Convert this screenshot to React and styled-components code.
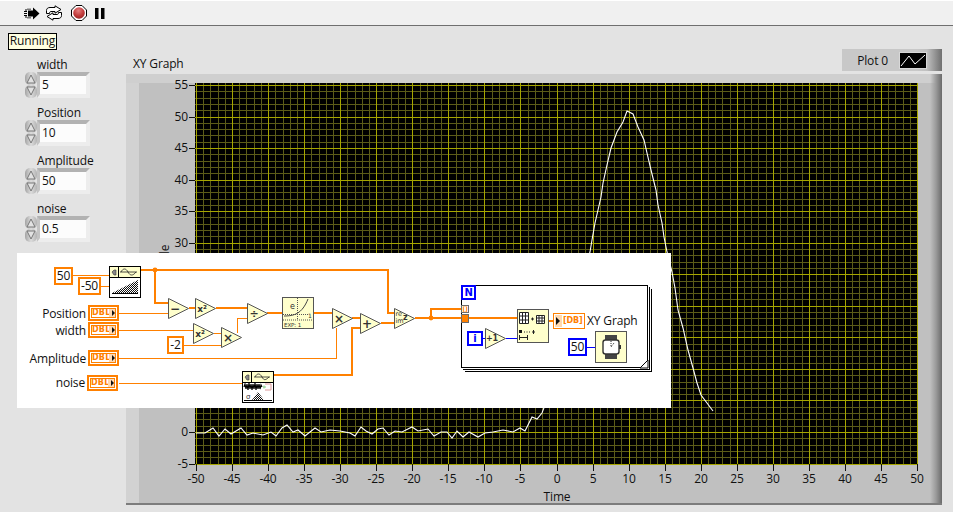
import React from 'react';
import styled, { createGlobalStyle } from 'styled-components';

const GlobalStyle = createGlobalStyle`
  html, body {
    margin: 0;
    padding: 0;
    background: #e3e3e3;
  }
`;

const ORANGE = '#ff8000';
const BLUE = '#0000ff';
const PALE = '#ffffcc';
const FONT = '"Open Sans", "Noto Sans", sans-serif';

const Page = styled.div`
  position: relative;
  width: 953px;
  height: 512px;
  overflow: hidden;
  background: #e3e3e3;
  font-family: ${FONT};
  font-size: 12px;
  letter-spacing: -0.15px;
  color: #111;
`;

const Toolbar = styled.div`
  display: flex;
  align-items: center;
  gap: 5px;
  height: 24px;
  padding-left: 24px;
  background: #f0f0f0;
  border-top: 1px solid #fff;
  border-bottom: 1px solid #6f6f6f;
  box-sizing: content-box;
`;

const ToolIcon = styled.svg`
  display: block;
  flex: none;
  margin-left: ${(p) => p.$gap || 0}px;
`;

const Main = styled.div`
  display: grid;
  grid-template-columns: 126px 816px;
`;

const LeftColumn = styled.div`
  display: flex;
  flex-direction: column;
`;

const RunningTag = styled.div`
  align-self: flex-start;
  margin: 7px 0 8px 8px;
  width: 49px;
  height: 17px;
  box-sizing: border-box;
  border: 1px solid #000;
  background: #ffffe1;
  font-size: 12px;
  line-height: 14px;
  text-align: center;
`;

const Control = styled.div`
  height: 40px;
  margin-bottom: 8px;
`;

const ControlLabel = styled.div`
  height: 14px;
  margin-left: 37px;
  font-size: 12px;
  line-height: 14px;
`;

const SpinRow = styled.div`
  display: flex;
  margin-left: 25px;
  height: 26px;
`;

const Spinner = styled.svg`
  display: block;
  width: 12px;
  height: 26px;
`;

const NumField = styled.div`
  width: 53px;
  height: 26px;
  box-sizing: border-box;
  border-style: solid;
  border-width: 4px 4px 4px 3px;
  border-color: #b2b2b2 #ededed #ededed #c4c4c4;
`;

const NumValue = styled.div`
  height: 100%;
  padding-left: 2px;
  background: #fcfcfc;
  font-size: 12px;
  line-height: 17px;
`;

const RightColumn = styled.div`
  display: flex;
  flex-direction: column;
`;

const GraphHeader = styled.div`
  display: flex;
  justify-content: space-between;
  align-items: flex-end;
  height: 48px;
`;

const GraphTitle = styled.div`
  margin: 0 0 2px 7px;
  font-size: 12px;
  line-height: 16px;
`;

const Legend = styled.div`
  display: flex;
  align-items: center;
  justify-content: flex-end;
  gap: 11px;
  width: 100px;
  height: 22px;
  margin-bottom: 3px;
  padding-right: 15px;
  box-sizing: border-box;
  background: linear-gradient(90deg, #c8c8c8 0 75%, #c0c0c0 85%, #6f6f6f 100%);
  font-size: 12px;
`;

const LegendSwatch = styled.svg`
  display: block;
  width: 28px;
  height: 17px;
  background: #000;
  box-sizing: border-box;
  border: 1px solid #d8d8d8;
`;

const GraphPanel = styled.div`
  width: 816px;
  height: 431px;
  border-bottom: 2px solid #7d7d7d;
  box-sizing: border-box;
  background:
    linear-gradient(90deg, transparent 804px, #9a9a9a 810px, #6a6a6a 816px),
    linear-gradient(180deg, #cfcfcf 0 9px, transparent 9px),
    linear-gradient(90deg, #d2d2d2 0 13px, #c0c0c0 13px);
`;

const Chart = styled.svg`
  display: block;
  width: 816px;
  height: 431px;

  text {
    font-family: ${FONT};
    font-size: 12px;
    fill: #111;
  }
`;

const Diagram = styled.div`
  position: absolute;
  left: 17px;
  top: 253px;
  width: 654px;
  height: 155px;
  background: #fff;
  overflow: hidden;
`;

const WireLayer = styled.svg`
  position: absolute;
  inset: 0;
  width: 654px;
  height: 155px;
`;

const Placed = styled.div`
  position: absolute;
  left: ${(p) => p.$x}px;
  top: ${(p) => p.$y}px;
`;

const Constant = styled(Placed)`
  width: ${(p) => p.$w}px;
  height: 18px;
  box-sizing: border-box;
  border: 2px solid ${(p) => p.$color || ORANGE};
  background: #fff;
  font-size: 12px;
  line-height: 14px;
  text-align: center;
`;

const Terminal = styled(Placed)`
  width: 31px;
  height: 16px;
  box-sizing: border-box;
  border: 2px solid ${ORANGE};
  background: #fff;
  padding: 1px;
`;

const TerminalInner = styled.div`
  position: relative;
  height: 100%;
  box-sizing: border-box;
  border: 1px solid ${ORANGE};
  padding-right: 5px;
  color: ${ORANGE};
  font: bold 8px/8px "DejaVu Sans", sans-serif;
  letter-spacing: 0.2px;
  text-align: center;

  &::before {
    content: '';
    position: absolute;
    right: 0;
    top: 0;
    bottom: 0;
    width: 6px;
    background: #ffd9b0;
  }

  &::after {
    content: '';
    position: absolute;
    right: 0;
    top: 1px;
    border-left: 3px solid #111;
    border-top: 3px solid transparent;
    border-bottom: 3px solid transparent;
  }
`;

const GraphTerminal = styled(Placed)`
  width: 32px;
  height: 16px;
  box-sizing: border-box;
  border: 1px solid ${ORANGE};
  background: #fff;
  padding-left: 9px;
  color: ${ORANGE};
  font: bold 8px/13px "DejaVu Sans", sans-serif;
  white-space: nowrap;

  &::before {
    content: '';
    position: absolute;
    left: 1px;
    top: 1px;
    bottom: 1px;
    width: 7px;
    background: #ffd9b0;
  }

  &::after {
    content: '';
    position: absolute;
    left: 2px;
    top: 3px;
    border-left: 4px solid #111;
    border-top: 4px solid transparent;
    border-bottom: 4px solid transparent;
  }
`;

const WireLabel = styled.div`
  position: absolute;
  left: 0;
  top: ${(p) => p.$y}px;
  width: ${(p) => p.$right}px;
  text-align: right;
  font-size: 12px;
  line-height: 16px;
`;

const FreeLabel = styled(Placed)`
  font-size: 12px;
  line-height: 16px;
  white-space: nowrap;
`;

const LoopFrame = styled(Placed)`
  width: 187px;
  height: 83px;
  box-sizing: border-box;
  border: 1px solid #000;
  background: #fff;
  box-shadow: 1px 1px 0 #fff, 2px 2px 0 #000, 3px 3px 0 #fff, 4px 4px 0 #000;
`;

const LoopBadge = styled(Placed)`
  width: ${(p) => p.$w}px;
  height: ${(p) => p.$h}px;
  box-sizing: border-box;
  border: 2px solid ${BLUE};
  background: #fff;
  color: ${BLUE};
  font: bold 10px/${(p) => p.$h - 4}px "DejaVu Sans", sans-serif;
  text-align: center;
`;

const Tunnel = styled(Placed)`
  width: 8px;
  height: ${(p) => p.$h}px;
  box-sizing: border-box;
  border: 1px solid #6b6b6b;
  background: ${(p) => (p.$filled ? ORANGE : '#fff')};
  color: ${ORANGE};
  font: bold 6px/6px "DejaVu Sans", sans-serif;
  text-align: center;
`;

const NodeIcon = styled.svg`
  position: absolute;
  left: ${(p) => p.$x}px;
  top: ${(p) => p.$y}px;
  width: ${(p) => p.$w}px;
  height: ${(p) => p.$h}px;
  display: block;
  overflow: visible;

  text {
    font-family: "DejaVu Sans", sans-serif;
    fill: #333;
  }
`;

const DIVISIONS_X = Array.from({ length: 101 }, (_, i) => i);
const DIVISIONS_Y = Array.from({ length: 61 }, (_, i) => i);
const TICKS_X = Array.from({ length: 21 }, (_, i) => -50 + i * 5);
const TICKS_Y = Array.from({ length: 13 }, (_, i) => -5 + i * 5);
// the block diagram hides the labels from 5 to 25
const LABELS_Y = TICKS_Y.filter((v) => v <= 0 || v >= 30);

const xPos = (v) => Math.round(196 + (v + 50) * 7.21);
const yPos = (v) => Math.round(432 - v * 6.31);

const TRACE = [
  [196, 433], [205, 433], [213, 428], [219, 436], [225, 429], [231, 434], [241, 428], [247, 435],
  [253, 433], [263, 435], [271, 432], [276, 436], [282, 428], [287, 425], [293, 432], [298, 430],
  [305, 436], [315, 428], [321, 432], [330, 430], [340, 431], [350, 433], [355, 436], [361, 427],
  [366, 431], [372, 434], [378, 429], [383, 428], [389, 435], [395, 431], [402, 432], [412, 427],
  [418, 431], [428, 429], [434, 436], [441, 432], [447, 432], [452, 438], [457, 431], [463, 437],
  [469, 432], [478, 437], [485, 433], [493, 432], [503, 430], [513, 432], [520, 428], [525, 431],
  [532, 417], [537, 419], [542, 413], [545, 405], [590, 252], [592, 240], [595, 223], [598, 210],
  [601, 197], [603, 183], [607, 165], [611, 148], [617, 132], [623, 122], [627, 111], [633, 114],
  [638, 127], [644, 140], [647, 153], [651, 170], [656, 190], [658, 205], [662, 223], [664, 237],
  [667, 252], [672, 272], [675, 288], [678, 310], [683, 328], [688, 350], [693, 368], [697, 383],
  [701, 395], [713, 411],
].map((p) => p.join(',')).join(' ');

const THICK_WIRES = [
  'M141 270H388V313H394', 'M155 270V303H168', 'M189 308H195', 'M216 308H247', 'M267 313H282',
  'M314 313H332', 'M352 318H360', 'M381 323H394', 'M273 375H352V328H360', 'M415 318H461',
  'M431 318V309H461', 'M469 318H517', 'M549 321H553',
];

const THIN_WIRES = [
  'M73 275.5H109', 'M101 286.5H109', 'M119 313.5H168', 'M119 330.5H193', 'M214 333.5H221',
  'M184 345.5H221', 'M237.5 333V318.5H247', 'M119 358.5H336.5V328', 'M119 383.5H242',
];

const BLUE_WIRES = ['M483 338.5H485', 'M506 338.5H517', 'M587 347.5H595'];

const PRIMITIVES = [
  { x: 151, y: 45, text: '−', size: 12 },
  { x: 178, y: 45, text: 'x²', size: 9 },
  { x: 230, y: 50, text: '÷', size: 11 },
  { x: 176, y: 70, text: 'x²', size: 9 },
  { x: 204, y: 74, text: '×', size: 12 },
  { x: 315, y: 55, text: '×', size: 12 },
  { x: 343, y: 60, text: '+', size: 12 },
];

function Primitive({ x, y, text, size, children }) {
  return (
    <NodeIcon $x={x} $y={y} $w={21} $h={21} viewBox="0 0 21 21">
      <polygon points="0.5,0.5 20.5,10.5 0.5,20.5" fill={PALE} stroke="#555" />
      {text && <text x="7" y="10.5" fontSize={size} fontWeight="bold" textAnchor="middle" dominantBaseline="central">{text}</text>}
      {children}
    </NodeIcon>
  );
}

function Toolbuttons() {
  return (
    <>
      <ToolIcon width="16" height="13" viewBox="0 0 16 13">
        <path d="M4 3.5H9V0.5L15.5 6.5L9 12.5V9.5H4Z" fill="#000" />
        <path d="M0 4.5H3M0 6.5H3M0 8.5H3M2 2V4M2 9V11M4 1.5V3M4 10V11.5M6 1.5V3M6 10V11.5" stroke="#000" fill="none" />
      </ToolIcon>
      <ToolIcon width="18" height="16" viewBox="0 0 18 16">
        <path d="M1.5 8.5V5.5C1.5 3.5 3 2.5 5 2.5H10V0.8L16 4.5L10 8.2V6.5H6C5 6.5 4.5 7 4.5 8.5Z" fill="#fff" stroke="#000" />
        <path d="M16.5 7.5V10.5C16.5 12.5 15 13.5 13 13.5H8V15.2L2 11.5L8 7.8V9.5H12C13 9.5 13.5 9 13.5 7.5Z" fill="#fff" stroke="#000" />
      </ToolIcon>
      <ToolIcon width="16" height="16" viewBox="0 0 16 16" $gap={3}>
        <defs>
          <radialGradient id="stopLight" cx="0.45" cy="0.3" r="0.8">
            <stop offset="0" stopColor="#e58080" />
            <stop offset="0.55" stopColor="#c23c3c" />
            <stop offset="1" stopColor="#8e2222" />
          </radialGradient>
        </defs>
        <polygon points="5,0.5 11,0.5 15.5,5 15.5,11 11,15.5 5,15.5 0.5,11 0.5,5" fill="#fff" stroke="#000" />
        <circle cx="8" cy="8" r="5.8" fill="url(#stopLight)" />
      </ToolIcon>
      <ToolIcon width="10" height="11" viewBox="0 0 10 11" $gap={3}>
        <rect x="0" y="0" width="3.5" height="11" fill="#000" />
        <rect x="6" y="0" width="3.5" height="11" fill="#000" />
      </ToolIcon>
    </>
  );
}

function NumericControl({ label, value }) {
  return (
    <Control>
      <ControlLabel>{label}</ControlLabel>
      <SpinRow>
        <Spinner viewBox="0 0 12 26">
          <defs>
            <linearGradient id="spinShade" x1="0" x2="1" y1="0" y2="0">
              <stop offset="0" stopColor="#a4a4a4" />
              <stop offset="0.5" stopColor="#dcdcdc" />
              <stop offset="1" stopColor="#b4b4b4" />
            </linearGradient>
          </defs>
          <rect x="0" y="0" width="12" height="13" rx="5" fill="url(#spinShade)" />
          <rect x="0" y="13" width="12" height="13" rx="5" fill="url(#spinShade)" />
          <path d="M6 3L10 11H2Z" fill="#e2e2e2" stroke="#777" />
          <path d="M6 23L10 15H2Z" fill="#e2e2e2" stroke="#777" />
        </Spinner>
        <NumField>
          <NumValue>{value}</NumValue>
        </NumField>
      </SpinRow>
    </Control>
  );
}

function XYChart() {
  return (
    <Chart viewBox="126 74 816 431">
      <rect x="195" y="83" width="723" height="381" fill="#000" />
      <g shapeRendering="crispEdges">
        {DIVISIONS_X.filter((i) => i % 5).map((i) => (
          <line key={i} x1={xPos(i - 50) + 0.5} x2={xPos(i - 50) + 0.5} y1="83" y2="464" stroke="#5c5c18" />
        ))}
        {DIVISIONS_Y.filter((i) => i % 5).map((i) => (
          <line key={i} x1="195" x2="918" y1={yPos(i - 5) + 0.5} y2={yPos(i - 5) + 0.5} stroke="#5c5c18" />
        ))}
        {TICKS_X.map((v) => (
          <line key={v} x1={xPos(v) + 0.5} x2={xPos(v) + 0.5} y1="83" y2="464" stroke="#a6a600" />
        ))}
        {TICKS_Y.map((v) => (
          <line key={v} x1="195" x2="918" y1={yPos(v) + 0.5} y2={yPos(v) + 0.5} stroke="#a6a600" />
        ))}
        {TICKS_X.map((v) => (
          <line key={v} x1={xPos(v) + 0.5} x2={xPos(v) + 0.5} y1="464" y2="471" stroke="#111" />
        ))}
        {TICKS_Y.map((v) => (
          <line key={v} x1="189" x2="195" y1={yPos(v) + 0.5} y2={yPos(v) + 0.5} stroke="#111" />
        ))}
      </g>
      <polyline points={TRACE} fill="none" stroke="#fff" strokeWidth="1.1" />
      {TICKS_X.map((v) => (
        <text key={v} x={xPos(v)} y="483" textAnchor="middle">{v}</text>
      ))}
      {LABELS_Y.map((v) => (
        <text key={v} x="188" y={yPos(v) + 4} textAnchor="end">{v}</text>
      ))}
      <text x="557" y="501" textAnchor="middle">Time</text>
      <text transform="translate(169 273) rotate(-90)" textAnchor="middle">Amplitude</text>
    </Chart>
  );
}

function BlockDiagram() {
  return (
    <Diagram>
      <LoopFrame $x={444} $y={32} />
      <NodeIcon $x={623} $y={107} $w={8} $h={8} viewBox="0 0 8 8">
        <path d="M0 8L8 0V8Z" fill="#fff" stroke="#000" />
      </NodeIcon>

      <WireLayer viewBox="17 253 654 155" shapeRendering="crispEdges">
        {THICK_WIRES.map((d) => <path key={d} d={d} fill="none" stroke={ORANGE} strokeWidth="2" />)}
        {THIN_WIRES.map((d) => <path key={d} d={d} fill="none" stroke={ORANGE} strokeWidth="1" />)}
        {BLUE_WIRES.map((d) => <path key={d} d={d} fill="none" stroke={BLUE} strokeWidth="1" />)}
        <circle cx="155" cy="270" r="2.4" fill={ORANGE} shapeRendering="auto" />
        <circle cx="431" cy="318" r="2.4" fill={ORANGE} shapeRendering="auto" />
      </WireLayer>

      <Constant $x={37} $y={14} $w={19}>50</Constant>
      <Constant $x={61} $y={24} $w={23}>-50</Constant>
      <Constant $x={150} $y={83} $w={17}>-2</Constant>
      <Constant $x={551} $y={85} $w={19} $color={BLUE}>50</Constant>

      <WireLabel $y={53} $right={69}>Position</WireLabel>
      <WireLabel $y={70} $right={69}>width</WireLabel>
      <WireLabel $y={98} $right={69}>Amplitude</WireLabel>
      <WireLabel $y={122} $right={68}>noise</WireLabel>

      <Terminal $x={71} $y={52}><TerminalInner>DBL</TerminalInner></Terminal>
      <Terminal $x={71} $y={69}><TerminalInner>DBL</TerminalInner></Terminal>
      <Terminal $x={71} $y={97}><TerminalInner>DBL</TerminalInner></Terminal>
      <Terminal $x={70} $y={122}><TerminalInner>DBL</TerminalInner></Terminal>

      {/* ramp pattern */}
      <NodeIcon $x={92} $y={13} $w={32} $h={32} viewBox="0 0 32 32">
        <defs>
          <pattern id="dots" width="2" height="2" patternUnits="userSpaceOnUse">
            <rect width="2" height="2" fill="#fff" />
            <rect width="1" height="1" fill="#111" />
            <rect x="1" y="1" width="1" height="1" fill="#111" />
          </pattern>
        </defs>
        <rect x="0.5" y="0.5" width="31" height="31" fill="#fff" stroke="#000" />
        <rect x="1" y="1" width="30" height="10" fill={PALE} />
        <path d="M0.5 11.5H31.5M9.5 0.5V11.5" stroke="#000" fill="none" />
        <path d="M3 6L5 4H7V9H5Z" fill="#888" stroke="#333" strokeWidth="0.6" />
        <path d="M12 6C14 2 17 2 19 6S24 10 27 6M11 6H28" fill="none" stroke="#222" strokeWidth="0.8" />
        <path d="M3 27L29 14V27Z" fill="url(#dots)" />
        <path d="M3 27.5H29" stroke="#000" />
      </NodeIcon>

      {PRIMITIVES.map((p) => <Primitive key={`${p.x}-${p.y}`} {...p} />)}
      <Primitive x={377} y={55}>
        <text x="1.5" y="7.5" fontSize="6.5">re</text>
        <text x="1.5" y="15" fontSize="6.5">im</text>
        <text x="9" y="11.5" fontSize="8" fontWeight="bold">z</text>
      </Primitive>
      <Primitive x={468} y={75} text="+1" size={8} />

      {/* exponential function */}
      <NodeIcon $x={265} $y={44} $w={32} $h={32} viewBox="0 0 32 32">
        <rect x="0.5" y="0.5" width="31" height="31" fill={PALE} stroke="#555" />
        <path d="M1 23H31" stroke="#555" strokeDasharray="1 1" />
        <path d="M1 17.5H27M15.5 1V23" stroke="#555" strokeDasharray="1 1" fill="none" />
        <path d="M2 19C12 19 20 17 26 2" fill="none" stroke="#444" />
        <text x="8" y="12" fontSize="8">e</text>
        <text x="26" y="20.5" fontSize="6">1</text>
        <text x="2" y="30" fontSize="5.6">EXP: 1</text>
      </NodeIcon>

      {/* gaussian noise */}
      <NodeIcon $x={225} $y={118} $w={32} $h={32} viewBox="0 0 32 32">
        <rect x="0.5" y="0.5" width="31" height="31" fill="#fff" stroke="#000" />
        <rect x="1" y="1" width="30" height="10" fill={PALE} />
        <path d="M0.5 11.5H31.5M9.5 0.5V11.5" stroke="#000" fill="none" />
        <path d="M3 6L5 4H7V9H5Z" fill="#888" stroke="#333" strokeWidth="0.6" />
        <path d="M13 6C15 2 18 2 20 6S24 9 27 6M12 6H28" fill="none" stroke="#222" strokeWidth="0.8" />
        <path d="M2 16L3 13L4 18L5 13L6 19L7 12L8 18L9 13L10 19L11 13L12 18L13 12L14 19L15 13L16 18L17 13L18 18L19 14L20 16" fill="none" stroke="#000" strokeWidth="1.2" />
        <path d="M23 13H29V19H23" fill="none" stroke="#d99" />
        <path d="M21 16H24M22 14.5V17.5" stroke="#8c8" />
        <path d="M10 29L16 21L22 29Z" fill="url(#dots)" />
        <path d="M2 29.5H30" stroke="#000" />
        <text x="4" y="28" fontSize="7">σ</text>
      </NodeIcon>

      <Tunnel $x={444} $y={52} $h={8}>[]</Tunnel>
      <Tunnel $x={444} $y={61} $h={9} $filled />
      <LoopBadge $x={444} $y={32} $w={15} $h={15}>N</LoopBadge>
      <LoopBadge $x={450} $y={78} $w={16} $h={15}>i</LoopBadge>

      {/* build matrix */}
      <NodeIcon $x={500} $y={56} $w={32} $h={34} viewBox="0 0 32 34">
        <rect x="0.5" y="0.5" width="31" height="33" fill={PALE} stroke="#555" />
        <path d="M2.5 3.5H11.5V14.5H2.5ZM2.5 7H11.5M2.5 11H11.5M5.5 3.5V14.5M8.5 3.5V14.5" fill="#fff" stroke="#222" />
        <path d="M19.5 6.5H27.5V14.5H19.5ZM19.5 9H27.5M19.5 12H27.5M22 6.5V14.5M25 6.5V14.5" fill="#fff" stroke="#222" />
        <path d="M14 10H17M15.5 8.5V11.5" stroke="#222" />
        <rect x="2" y="21" width="3" height="3" fill="#111" />
        <path d="M7 23H8M9.5 23H10.5M12 23H13M15 23H18M16.5 21V25" stroke="#222" />
        <path d="M2.5 26V31M10.5 26V31M2.5 28.5H10.5" stroke="#222" fill="none" />
      </NodeIcon>

      <GraphTerminal $x={536} $y={60}>[DB]</GraphTerminal>
      <FreeLabel $x={570} $y={60}>XY Graph</FreeLabel>

      {/* wait timer */}
      <NodeIcon $x={578} $y={78} $w={32} $h={32} viewBox="0 0 32 32">
        <rect x="0.5" y="0.5" width="31" height="31" fill={PALE} stroke="#555" />
        <path d="M10 4H22V9H10ZM10 23H22V28H10Z" fill="#444" />
        <rect x="8" y="9" width="16" height="14" rx="2.5" fill="#fff" stroke="#333" strokeWidth="1.4" />
        <rect x="24" y="14" width="2" height="4" fill="#333" />
        <path d="M16 10V16L19 12" fill="none" stroke="#333" strokeDasharray="1 1" />
      </NodeIcon>
    </Diagram>
  );
}

export default function App() {
  return (
    <Page>
      <GlobalStyle />
      <Toolbar>
        <Toolbuttons />
      </Toolbar>
      <Main>
        <LeftColumn>
          <RunningTag>Running</RunningTag>
          <NumericControl label="width" value="5" />
          <NumericControl label="Position" value="10" />
          <NumericControl label="Amplitude" value="50" />
          <NumericControl label="noise" value="0.5" />
        </LeftColumn>
        <RightColumn>
          <GraphHeader>
            <GraphTitle>XY Graph</GraphTitle>
            <Legend>
              <span>Plot 0</span>
              <LegendSwatch viewBox="0 0 26 15">
                <path d="M1 13L9 3L15 11L25 2" fill="none" stroke="#fff" />
              </LegendSwatch>
            </Legend>
          </GraphHeader>
          <GraphPanel>
            <XYChart />
          </GraphPanel>
        </RightColumn>
      </Main>
      <BlockDiagram />
    </Page>
  );
}
